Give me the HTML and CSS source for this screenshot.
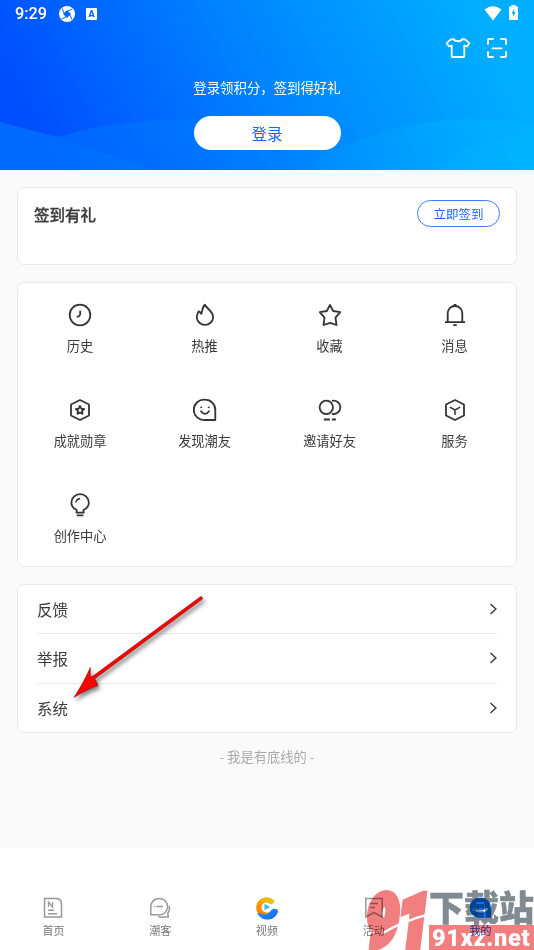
FILE: index.html
```html
<!DOCTYPE html>
<html lang="zh-CN">
<head>
<meta charset="utf-8">
<meta name="viewport" content="width=device-width, initial-scale=1">
<title>我的</title>
<link rel="stylesheet" href="styles.css">
</head>
<body>
<div class="screen">
  <header class="hero">
    <svg class="waves" viewBox="0 0 534 170" preserveAspectRatio="none">
      <defs>
        <linearGradient id="w1" x1="0" y1="0" x2="1" y2="0"><stop offset="0" stop-color="#0088ff" stop-opacity=".34"/><stop offset="1" stop-color="#0090ff" stop-opacity=".05"/></linearGradient>
        <linearGradient id="w3" x1="0" y1="0" x2="1" y2="0"><stop offset="0" stop-color="#0080ff" stop-opacity=".55"/><stop offset="1" stop-color="#0088ff" stop-opacity=".5"/></linearGradient>
        <linearGradient id="w2" x1="0" y1="0" x2="1" y2="0"><stop offset="0" stop-color="#00b4ff" stop-opacity=".05"/><stop offset="1" stop-color="#00b4ff" stop-opacity=".6"/></linearGradient>
      </defs>
      <path fill="url(#w1)" d="M58 137C110 122 160 118 215 119C270 124 300 145 345 152L430 170H155L58 137Z"/>
      <path fill="url(#w3)" d="M0 122L58 137L155 170H0Z"/>
      <path fill="url(#w2)" d="M300 170C330 150 390 122 460 119C490 118 515 121 534 124V170Z"/>
      <path fill="url(#w2)" d="M415 170C455 151 500 137 534 134V170Z"/>
    </svg>
    <div class="status">
      <span class="clock">9:29</span>
      <svg class="s-app" width="16" height="16" viewBox="0 0 16 16"><circle cx="8" cy="8" r="8" fill="#fff"/><path d="M8 4 12 8 8 12 4 8Z" fill="#0067ff"/><path d="M5 7 3 2.500M9 5 13.500 3M11 9 13 13.500M7 11 2.500 13" stroke="#0067ff" stroke-width="1" fill="none"/></svg>
      <span class="s-a">A</span>
      <span class="grow"></span>
      <svg width="18" height="15" viewBox="0 0 18 15"><path fill="#fff" d="M.5 3.5Q9-2.8 17.500 3.500L9 14.500Z"/></svg>
      <svg class="s-bat" width="9" height="15" viewBox="0 0 9 15"><path fill="#fff" d="M2.500 0h4v1.500H9V15H0V1.500h2.500Z"/><path fill="#00a5ff" d="M5.500 3.500 2.500 8.500H4.200L3.700 12 6.700 7.200H5Z"/></svg>
    </div>
    <div class="tools">
      <svg width="26" height="22" viewBox="0 0 26 22"><path d="M8.500 2C10 5 16 5 17.500 2L20.500 2.600 24.300 6.200 22 9.500 19.300 8.500V19.300Q19.300 20 18.500 20H7.500Q6.700 20 6.700 19.300V8.500L4 9.500 1.700 6.200 5.500 2.600Z" fill="none" stroke="#fff" stroke-width="1.800" stroke-linejoin="round"/></svg>
      <svg width="20" height="20" viewBox="0 0 20 20" fill="none" stroke="#fff" stroke-width="1.800" stroke-linecap="round"><path d="M1 6V2Q1 1 2 1H6M14 1H18Q19 1 19 2V6M19 14V18Q19 19 18 19H14M6 19H2Q1 19 1 18V14M5.500 10.300H14.500"/></svg>
    </div>
    <p class="tip">登录领积分，签到得好礼</p>
    <button class="login">登录</button>
  </header>

  <main class="content">
    <section class="card sign">
      <h2>签到有礼</h2>
      <button class="sign-btn">立即签到</button>
    </section>

    <section class="card grid">
      <div class="item"><svg viewBox="0 0 24 24"><circle cx="12" cy="12" r="10.300"/><path d="M12.200 7.800V11.500Q11.500 13.500 8.800 13.900"/></svg><span>历史</span></div>
      <div class="item"><svg viewBox="0 0 24 24"><path d="M11.800 1.600C13.500 5.500 20.200 8.300 20.200 14.500A8.300 8.300 0 0 1 3.700 14.500C3.700 11.700 5 10.700 5.600 8.300Q7.800 9.300 8.200 10.800C9.800 9.300 8.500 4.500 11.800 1.600Z"/></svg><span>热推</span></div>
      <div class="item"><svg viewBox="0 0 24 24"><path d="M12 2 15.200 8 22.200 9.200 17.500 14.600 18.500 22 12 19.800 5.500 22 6.500 14.600 1.800 9.200 8.800 8Z"/></svg><span>收藏</span></div>
      <div class="item"><svg viewBox="0 0 24 24"><path d="M4.700 19V10.300A7.300 7.300 0 0 1 19.300 10.300V19M2 19.200H22M10.200 22.100H13.800M10.600 2H13.400"/></svg><span>消息</span></div>
      <div class="item"><svg viewBox="0 0 24 24"><path d="M12 2 21 6.500V17.500L12 22 3 17.500V6.500Z"/><path d="M12 8 13.200 10.600 16 11 14 13 14.500 15.900 12 14.500 9.500 15.900 10 13 8 11 10.800 10.600Z"/></svg><span>成就勋章</span></div>
      <div class="item"><svg viewBox="0 0 24 24"><path d="M12 1.700A10.200 10.200 0 1 0 12 22H22.300V12A10.300 10.300 0 0 0 12 1.700Z"/><path d="M8 13.300Q12 18.500 16 13.300M8.200 9.300h.1M15.700 9.300h.1" stroke-linecap="round"/></svg><span>发现潮友</span></div>
      <div class="item"><svg viewBox="0 0 24 24"><circle cx="8.300" cy="9.300" r="6.700"/><path d="M14 2.800A6.700 6.700 0 1 1 14 15.800M5.800 21.500H11.900M13.900 21.500H17.900"/></svg><span>邀请好友</span></div>
      <div class="item"><svg viewBox="0 0 24 24"><path d="M12 2 21 6.500V17.500L12 22 3 17.500V6.500Z"/><path d="M6.800 9.200 12 12 17.200 9.200M12 12V17" stroke-width="1.500"/></svg><span>服务</span></div>
      <div class="item"><svg viewBox="0 0 24 24"><path d="M8.700 19V17Q3.400 14.500 3.400 9.800A8.700 8.700 0 0 1 20.800 9.800Q20.800 14.500 15.500 17V19M7.700 19.700H16.500M8.800 22.300H15.400"/><path d="M8 9.500Q8.200 6.200 12.200 5.500" stroke-width="1.500"/></svg><span>创作中心</span></div>
    </section>

    <section class="card list">
      <div class="row"><span>反馈</span><svg width="8" height="12" viewBox="0 0 8 12"><path d="M1.500 1 6.800 6 1.500 11"/></svg></div>
      <div class="row"><span>举报</span><svg width="8" height="12" viewBox="0 0 8 12"><path d="M1.500 1 6.800 6 1.500 11"/></svg></div>
      <div class="row"><span>系统</span><svg width="8" height="12" viewBox="0 0 8 12"><path d="M1.500 1 6.800 6 1.500 11"/></svg></div>
    </section>
    <p class="end">- 我是有底线的 -</p>
  </main>

  <nav class="tabs">
    <div class="tab"><svg viewBox="0 0 24 24"><path d="M3.500 2.500H15.500Q20.500 3 20.500 8V21H3.500Z"/><path d="M7.500 11V6L11.500 11V6" stroke-width="1.300"/><path d="M7 14.300H13M7 17.700H16"/></svg><span>首页</span></div>
    <div class="tab"><svg viewBox="0 0 24 24"><path d="M10.500 2.500A8.200 8.200 0 1 1 10.500 18.800H2.800V11A8 8 0 0 1 10.500 2.500Z"/><path d="M6 10.500H7.200M8.300 10.500H15M21 10Q22.500 14 19.800 17L20.300 21H14Q11.500 21 10.500 20.300"/></svg><span>潮客</span></div>
    <div class="tab"><svg viewBox="0 0 24 24">
      <defs><linearGradient id="va" x1="0" y1="1" x2="1" y2="0"><stop offset="0" stop-color="#ff6a00"/><stop offset=".5" stop-color="#ffa800"/><stop offset="1" stop-color="#d5d60a"/></linearGradient><linearGradient id="vb" x1="0" y1="0" x2="1" y2="1"><stop offset="0" stop-color="#1a9cff"/><stop offset="1" stop-color="#1764f4"/></linearGradient></defs>
      <path class="solid" fill="url(#va)" d="M19.500 5C15 -1 5 .5 2 7.500C0 12.500 2 18 7 19.500C10 20 13 18.500 15 16C11 17.500 6.800 15.500 6.500 12C6.300 8.500 9 6.500 12 6.500C14.500 8.500 19 9 19.500 5Z"/><path class="solid" fill="url(#vb)" d="M2.200 17C5 16.700 6.500 19 10 18.500C14.500 18 15.500 13.200 19 12.700C22 12.500 23.600 14 22.800 16.500C21 21 17 23.800 12 23.500C7.500 23.500 4 21 2.200 17Z"/><path class="solid" fill="#32b7f4" d="M9.500 7.700 15 11 9.500 14.300Z"/></svg><span>视频</span></div>
    <div class="tab"><svg viewBox="0 0 24 24"><path d="M3.800 2.500H20.200V21L12 16.500 3.800 21Z"/><path d="M8 7.500H16M8 11.500H13"/></svg><span>活动</span></div>
    <div class="tab active"><svg viewBox="0 0 24 24"><path class="solid" fill="#087aff" d="M12 1.500A10.200 10.200 0 1 0 12 21.800H22.200V12A10.500 10.500 0 0 0 12 1.500Z"/><path d="M6.500 14Q14 17.500 18.500 12.500" stroke="#fff" stroke-width="2"/></svg><span>我的</span></div>
  </nav>

  <svg class="arrow" width="150" height="120" viewBox="0 0 150 120"><path d="M135.700 6.500 28 86 25.300 86.500 25.300 77.500Q20 90 9 107.500Q22 99 33 95.500L29.800 88.700 137.500 9Q138 7 135.700 6.500Z" fill="#f00" stroke="#700" stroke-width=".5"/></svg>

  <div class="watermark">
    <svg class="wm-mark" width="66" height="60" viewBox="0 0 66 60"><g transform="translate(1 56) skewX(-7)"><text class="wm-digits" x="0" y="0" textLength="63" lengthAdjust="spacingAndGlyphs">91</text></g><path d="M20 43Q40 31 67 24" stroke="#fff" stroke-width="2.500" fill="none"/></svg>
    <div class="wm-text">
      <span class="wm-cn">下载站</span>
      <span class="wm-url">91xz.net</span>
    </div>
  </div>
</div>
</body>
</html>
```
FILE: styles.css
```css
* { box-sizing: border-box; }
body {
  margin: 0;
  font-family: Roboto, "Noto Sans CJK SC", sans-serif;
  color: #3a3a3a;
  background: #fafafa;
}
p, h2 { margin: 0; }
button { font: inherit; padding: 0; border: 0; }
.screen {
  position: relative;
  width: 534px;
  height: 950px;
  overflow: hidden;
  display: flex;
  flex-direction: column;
  background: #fafafa;
}

/* Header */
.hero {
  position: relative;
  height: 170px;
  flex: none;
  display: flex;
  flex-direction: column;
  align-items: center;
  color: #fff;
  background: linear-gradient(62deg, #004eff 9%, #0084ff 50%, #00adff 88%);
}
.hero > * { position: relative; }
.hero > .waves { position: absolute; inset: 0; width: 100%; height: 100%; }
.status {
  width: 100%;
  height: 27px;
  padding: 0 16px 0 15px;
  display: flex;
  align-items: center;
}
.clock { font-size: 16.3px; font-weight: 500; width: 44px; }
.s-a {
  width: 11px;
  height: 12px;
  margin-left: 11px;
  border-radius: 1px;
  background: #fff;
  color: #0067ff;
  font-size: 9px;
  font-weight: 900;
  line-height: 12px;
  text-align: center;
}
.grow { flex: 1; }
.s-bat { margin-left: 7px; margin-top: -2px; }
.tools {
  width: 100%;
  height: 42px;
  padding-right: 27px;
  display: flex;
  justify-content: flex-end;
  align-items: center;
  gap: 16px;
}
.tip { margin-top: 9.5px; font-size: 13.4px; line-height: 20px; }
.login {
  width: 147px;
  height: 34px;
  margin-top: 17.5px;
  padding-bottom: 1px;
  border-radius: 17px;
  background: #fff;
  color: #1766ff;
  font-size: 15.5px;
}

/* Cards */
.content {
  flex: 1;
  padding: 17px 17px 0;
  display: flex;
  flex-direction: column;
  gap: 17px;
}
.card {
  flex: none;
  background: #fff;
  border: 1px solid #e9e9e9;
  border-radius: 7px;
}
.sign {
  height: 78px;
  padding: 12px 16px 0 16px;
  display: flex;
  justify-content: space-between;
  align-items: flex-start;
}
.sign h2 { margin-top: 4px; font-size: 15.5px; line-height: 24px; font-weight: 500; -webkit-text-stroke: .3px; }
.sign-btn {
  width: 83px;
  height: 27px;
  padding-bottom: 1px;
  border: 1px solid #3b7dfb;
  border-radius: 14px;
  background: #fff;
  color: #1766ff;
  font-size: 12.5px;
}
.grid {
  height: 285px;
  display: grid;
  grid-template-columns: 124px repeat(3, 125px);
  grid-auto-rows: 95px;
}
.item {
  padding-top: 20px;
  display: flex;
  flex-direction: column;
  align-items: center;
  gap: 10px;
  font-size: 13.2px;
  line-height: 20px;
}
.item svg {
  width: 24px;
  height: 24px;
  fill: none;
  stroke: #333;
  stroke-width: 1.8;
  stroke-linejoin: round;
}
.list { height: 149px; padding: 0 19px; }
.row {
  height: 50px;
  padding-bottom: 1px;
  display: flex;
  align-items: center;
  justify-content: space-between;
  font-size: 15.5px;
}
.row:first-child { height: 48px; }
.row + .row { border-top: 1px solid #e9e9e9; }
.row svg { fill: none; stroke: #444; stroke-width: 1.6; }
.end { margin-top: -2px; font-size: 13.3px; line-height: 20px; text-align: center; color: #aaa; }

/* Bottom tabs */
.tabs {
  height: 102px;
  flex: none;
  padding-top: 48px;
  display: grid;
  grid-template-columns: repeat(5, 1fr);
  background: #fff;
}
.tab {
  display: flex;
  flex-direction: column;
  align-items: center;
  gap: 4px;
  font-size: 11px;
  line-height: 16px;
  color: #777;
}
.tab svg { width: 24px; height: 24px; fill: none; stroke: #999; stroke-width: 1.5; }
.tab .solid { stroke: none; }
.active { color: #1766ff; }

/* Annotation and site mark laid over the screen */
.arrow {
  position: absolute;
  left: 65px;
  top: 590px;
  filter: drop-shadow(2px 3px 2px rgba(0, 0, 0, .5));
}
.watermark {
  position: absolute;
  left: 363px;
  bottom: 0;
  width: 171px;
  height: 60px;
  display: flex;
  opacity: .85;
  mix-blend-mode: multiply;
}
.wm-mark { flex: none; overflow: hidden; }
.wm-digits {
  font: 900 72px Roboto, sans-serif;
  fill: #f0686a;
  stroke: #f0686a;
  stroke-width: 8;
}
.wm-text { width: 105px; display: flex; flex-direction: column; }
.wm-cn {
  height: 35px;
  font: 900 35px/31px "Noto Sans CJK SC", sans-serif;
  color: #6b757e;
  -webkit-text-stroke: .5px #6b757e;
  white-space: nowrap;
}
.wm-url {
  height: 25px;
  padding-left: 3px;
  background: #f0686a;
  color: #fff;
  font: 900 23.500px/26px Roboto, sans-serif;
  letter-spacing: .7px;
  white-space: nowrap;
}
```
